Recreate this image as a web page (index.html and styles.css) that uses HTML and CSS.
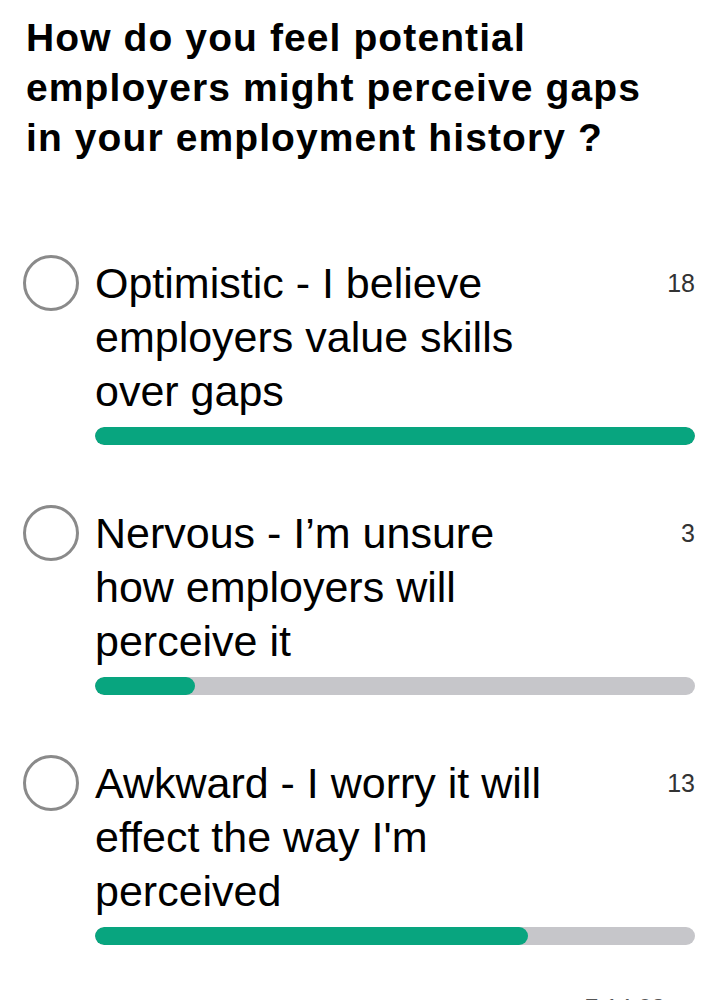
FILE: index.html
```html
<!DOCTYPE html>
<html lang="en">
<head>
    <meta charset="UTF-8">
    <meta name="viewport" content="width=device-width, initial-scale=1.0">
    <title>Poll</title>
    <link rel="stylesheet" href="styles.css">
</head>
<body>
    <div class="poll">
        <h1 class="question">How do you feel potential employers might perceive gaps in your employment history ?</h1>

        <div class="options">
            <div class="option">
                <span class="radio"></span>
                <div class="label">Optimistic - I believe employers value skills over gaps</div>
                <div class="count">18</div>
                <div class="bar"><div class="fill" style="width: 100%"></div></div>
            </div>

            <div class="option">
                <span class="radio"></span>
                <div class="label">Nervous - I’m unsure how employers will perceive it</div>
                <div class="count">3</div>
                <div class="bar"><div class="fill" style="width: 16.7%"></div></div>
            </div>

            <div class="option">
                <span class="radio"></span>
                <div class="label">Awkward - I worry it will effect the way I'm perceived</div>
                <div class="count">13</div>
                <div class="bar"><div class="fill" style="width: 72.2%"></div></div>
            </div>
        </div>

        <div class="meta">7 14:03</div>
    </div>
</body>
</html>
```

FILE: styles.css
```css
/* general */
* {
    margin: 0;
    padding: 0;
    box-sizing: border-box;
}

body {
    background-color: #FFFFFF;
    color: #000000;
    font-family: "Liberation Sans", Arial, sans-serif;
    overflow: hidden;
}

.poll {
    padding: 13px 27px 0 23px;
}

.question {
    font-size: 39px;
    line-height: 50px;
    font-weight: bold;
    letter-spacing: 1.1px;
    padding-left: 3px;
    max-width: 650px;
}

.options {
    margin-top: 93px;
}

.option {
    display: grid;
    grid-template-columns: 72px 1fr auto;
    margin-bottom: 61px;
}

.radio {
    width: 56px;
    height: 56px;
    margin-top: -1px;
    border: 3.5px solid #8A8A8A;
    border-radius: 50%;
}

.label {
    font-size: 43px;
    line-height: 54px;
    max-width: 455px;
}

.count {
    font-size: 25px;
    line-height: 54px;
    color: #333333;
}

.bar {
    grid-column: 2 / 4;
    height: 18px;
    margin-top: 9px;
    border-radius: 9px;
    background-color: #C6C6CA;
    overflow: hidden;
}

.fill {
    height: 100%;
    border-radius: 9px;
    background-color: #08A57F;
}

/* bottom line, cut off by the screen */
.meta {
    margin-top: -12px;
    text-align: right;
    padding-right: 30px;
    font-size: 24px;
    color: #555555;
}
```
